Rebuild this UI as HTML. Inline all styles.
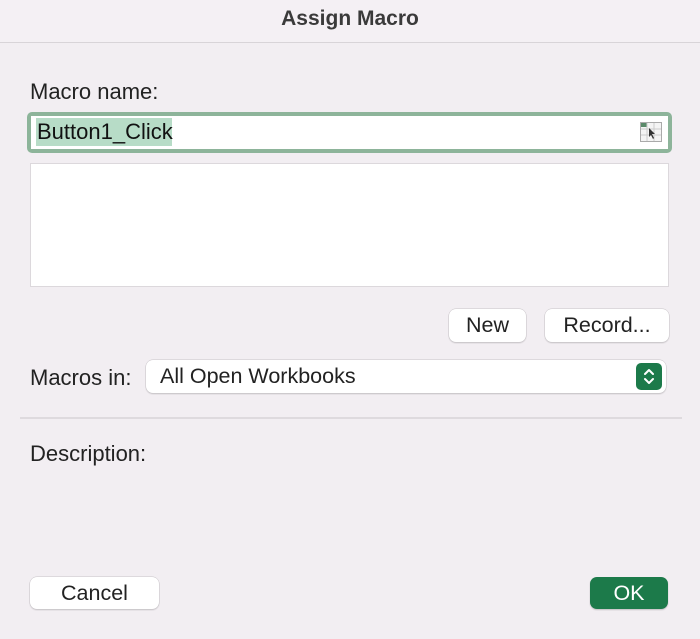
<!DOCTYPE html>
<html><head><style>
*{box-sizing:border-box;margin:0;padding:0}
body{width:700px;height:639px;background:#f2eef2;font-family:"Liberation Sans",sans-serif;color:#222;position:relative;overflow:hidden}
.a{position:absolute}
.t{font-size:22px;line-height:1}
.btn{position:absolute;background:#fff;border-radius:7px;box-shadow:0 0 0 0.5px #c8c4c8,0 1px 1.5px rgba(0,0,0,.2);font-size:21.5px;display:flex;align-items:center;justify-content:center;color:#222}
</style></head><body>
<div class="a" style="left:0;top:0;width:700px;height:43px;background:#f4f0f4;border-bottom:1px solid #d8d4d8"></div>
<div class="a t" style="left:0;width:700px;top:8px;text-align:center;font-weight:bold;color:#3a3a3a;font-size:21px">Assign Macro</div>
<div class="a t" style="left:30px;top:81px">Macro name:</div>
<div class="a" style="left:27px;top:112px;width:645px;height:41px;background:#8db49a;border-radius:5px"></div>
<div class="a" style="left:31px;top:116px;width:637px;height:33px;background:#fff"></div>
<div class="a" style="left:36px;top:118px;width:136px;height:28px;background:#b7dcc7"></div>
<div class="a t" style="left:37px;top:121px;font-size:22px;color:#111">Button1_Click</div>
<svg class="a" style="left:640px;top:122px" width="22" height="20" viewBox="0 0 22 20"><rect x="0.5" y="0.5" width="21" height="19" fill="#f4f4f4" stroke="#aaa"/><rect x="1" y="1" width="6" height="4" fill="#5a8a6a"/><path d="M7 1V19M14 1V19M1 7H21M1 13H21" stroke="#ccc"/><path d="M9 6l6 6-3 0 2 4-1 1-2-4-2 2z" fill="#333"/></svg>
<div class="a" style="left:30px;top:163px;width:639px;height:124px;background:#fff;border:1px solid #dcd8dc"></div>
<div class="btn" style="left:449px;top:309px;width:77px;height:33px">New</div>
<div class="btn" style="left:545px;top:309px;width:124px;height:33px">Record...</div>
<div class="a t" style="left:30px;top:367px">Macros in:</div>
<div class="btn" style="left:146px;top:360px;width:520px;height:33px;justify-content:flex-start;padding-left:14px">All Open Workbooks</div>
<div class="a" style="left:636px;top:363px;width:26px;height:27px;background:#1c7a4a;border-radius:5px"></div>
<svg class="a" style="left:636px;top:363px" width="26" height="27" viewBox="0 0 26 27"><path d="M9 11l4-4 4 4M9 16l4 4 4-4" stroke="#fff" stroke-width="2" fill="none" stroke-linecap="round" stroke-linejoin="round"/></svg>
<div class="a" style="left:20px;top:417px;width:662px;height:2px;background:#dedade"></div>
<div class="a t" style="left:30px;top:443px">Description:</div>
<div class="btn" style="left:30px;top:577px;width:129px;height:32px">Cancel</div>
<div class="btn" style="left:590px;top:577px;width:78px;height:32px;background:#1c7a4a;color:#fff;box-shadow:0 1px 1.5px rgba(0,0,0,.2)">OK</div>
</body></html>
